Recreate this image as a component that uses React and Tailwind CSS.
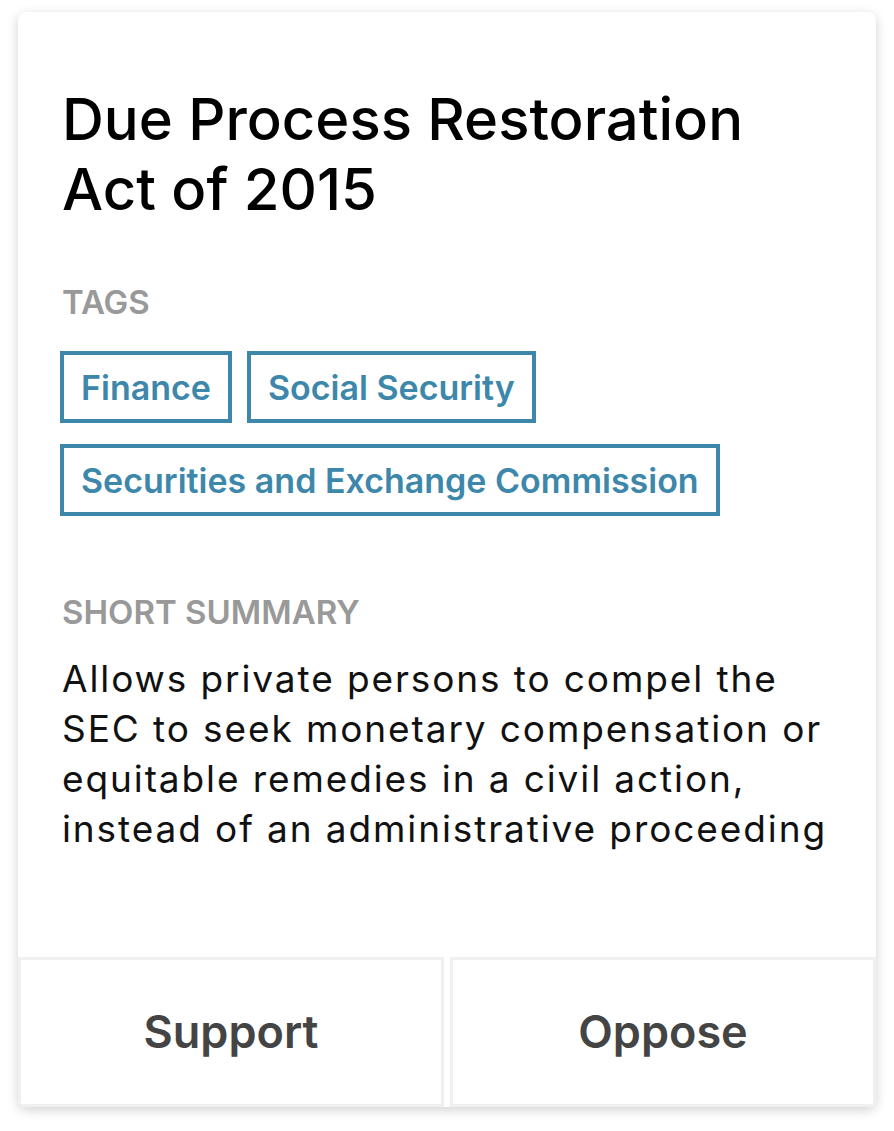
import React from 'react';

const tags = ['Finance', 'Social Security', 'Securities and Exchange Commission'];

const BillCard = () => {
  return (
    <div className="ml-[18px] mt-[12px] flex h-[1095px] w-[858px] flex-col overflow-hidden rounded-lg bg-white shadow-[0_3px_12px_rgba(0,0,0,0.18)]">
      <div className="flex-1 px-[44px] pt-[72px]">
        {/* Titre */}
        <h1 className="text-[58px] font-medium leading-[70px] text-black">
          Due Process Restoration
          <br />
          Act of 2015
        </h1>

        {/* Tags */}
        <div className="mt-[58px] text-[33px] font-semibold uppercase leading-[40px] text-[#999999]">
          Tags
        </div>
        <div className="-ml-[2px] mt-[29px] flex flex-wrap gap-x-[15px] gap-y-[21px]">
          {tags.map((tag) => (
            <span
              key={tag}
              className="flex h-[72px] items-center border-4 border-[#3d87ab] px-[17px] text-[34px] font-semibold text-[#3d87ab]"
            >
              {tag}
            </span>
          ))}
        </div>

        {/* Résumé */}
        <div className="mt-[76px] text-[33px] font-semibold uppercase leading-[40px] text-[#999999]">
          Short summary
        </div>
        <p className="mt-[22px] text-[37px] leading-[50px] tracking-[1.9px] text-[#111111]">
          Allows private persons to compel the SEC to seek monetary compensation or equitable remedies in a civil
          action, instead of an administrative proceeding
        </p>
      </div>

      {/* Boutons */}
      <div className="flex gap-[6px]">
        <button
          type="button"
          className="h-[150px] flex-1 border-[3px] border-[#f0f0f0] bg-white text-[45px] font-semibold text-[#444444]"
        >
          Support
        </button>
        <button
          type="button"
          className="h-[150px] flex-1 border-[3px] border-[#f0f0f0] bg-white text-[45px] font-semibold text-[#444444]"
        >
          Oppose
        </button>
      </div>
    </div>
  );
};

export default function App() {
  return (
    <div className="min-h-[1131px] bg-white pt-px font-['Inter',sans-serif]">
      <div className="-mt-px">
        <BillCard />
      </div>
    </div>
  );
}
